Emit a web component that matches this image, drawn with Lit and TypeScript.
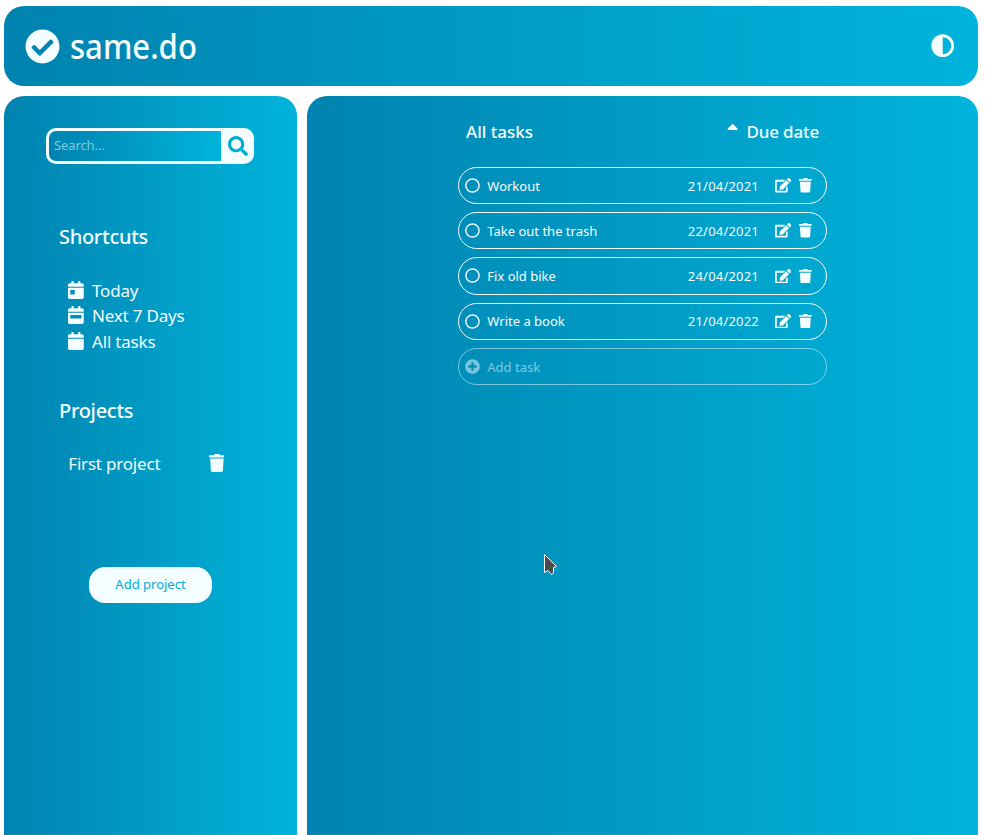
import { LitElement, html, css, svg } from "lit";
import { customElement, property } from "lit/decorators.js";

const CAL_TOP =
  "M400 64h-48V16c0-8.800-7.200-16-16-16h-32c-8.800 0-16 7.200-16 16v48H160V16c0-8.800-7.200-16-16-16h-32c-8.800 0-16 7.200-16 16v48H48C21.500 64 0 85.500 0 112v48h448v-48c0-26.500-21.500-48-48-48z";
const CAL_BODY = "M0 464c0 26.500 21.500 48 48 48h352c26.500 0 48-21.500 48-48V192H0v272z";

const ICONS: Record<string, [number, string]> = {
  check: [512, "M504 256c0 136.967-111.033 248-248 248S8 392.967 8 256 119.033 8 256 8s248 111.033 248 248zM227.314 387.314l184-184c6.248-6.248 6.248-16.379 0-22.627l-22.627-22.627c-6.248-6.249-16.379-6.249-22.628 0L216 308.118l-70.059-70.059c-6.248-6.248-16.379-6.248-22.628 0l-22.627 22.627c-6.248 6.248-6.248 16.379 0 22.627l104 104c6.249 6.249 16.379 6.249 22.628.001z"],
  adjust: [512, "M8 256c0 136.966 111.033 248 248 248s248-111.034 248-248S392.966 8 256 8 8 119.033 8 256zm248 184V72c101.705 0 184 82.311 184 184 0 101.705-82.311 184-184 184z"],
  search: [512, "M505 442.7L405.3 343c-4.5-4.5-10.600-7-17-7H372c27.600-35.300 44-79.700 44-128C416 93.100 322.900 0 208 0S0 93.100 0 208s93.100 208 208 208c48.300 0 92.700-16.400 128-44v16.300c0 6.400 2.500 12.500 7 17l99.700 99.700c9.400 9.400 24.600 9.400 33.900 0l28.300-28.300c9.400-9.400 9.400-24.600.1-34zM208 336c-70.700 0-128-57.200-128-128 0-70.700 57.200-128 128-128 70.700 0 128 57.200 128 128 0 70.700-57.200 128-128 128z"],
  day: [448, CAL_BODY + "M64 272c0-8.800 7.200-16 16-16h96c8.800 0 16 7.200 16 16v96c0 8.800-7.200 16-16 16H80c-8.800 0-16-7.200-16-16v-96z" + CAL_TOP],
  week: [448, CAL_BODY + "M64 272c0-8.800 7.200-16 16-16h288c8.800 0 16 7.200 16 16v64c0 8.800-7.200 16-16 16H80c-8.800 0-16-7.200-16-16v-64z" + CAL_TOP],
  calendar: [448, CAL_BODY + CAL_TOP],
  trash: [448, "M432 32H312l-9.400-18.700A24 24 0 0 0 281.100 0H166.800a23.720 23.720 0 0 0-21.400 13.300L136 32H16A16 16 0 0 0 0 48v32a16 16 0 0 0 16 16h416a16 16 0 0 0 16-16V48a16 16 0 0 0-16-16zM53.200 467a48 48 0 0 0 47.900 45h245.800a48 48 0 0 0 47.900-45L416 128H32z"],
  circle: [512, "M256 8C119 8 8 119 8 256s111 248 248 248 248-111 248-248S393 8 256 8zm0 448c-110.500 0-200-89.500-200-200S145.500 56 256 56s200 89.500 200 200-89.500 200-200 200z"],
  plus: [512, "M256 8C119 8 8 119 8 256s111 248 248 248 248-111 248-248S393 8 256 8zm144 276c0 6.600-5.400 12-12 12h-92v92c0 6.600-5.400 12-12 12h-56c-6.600 0-12-5.400-12-12v-92h-92c-6.600 0-12-5.400-12-12v-56c0-6.600 5.400-12 12-12h92v-92c0-6.600 5.400-12 12-12h56c6.600 0 12 5.400 12 12v92h92c6.600 0 12 5.400 12 12v56z"],
  edit: [576, "M402.600 83.200l90.200 90.200c3.800 3.800 3.800 10 0 13.800L274.400 405.600l-92.800 10.300c-12.400 1.400-22.900-9.100-21.500-21.500l10.300-92.800L388.800 83.200c3.800-3.800 10-3.800 13.800 0zm162-22.900l-48.800-48.800c-15.200-15.200-39.900-15.200-55.200 0l-35.400 35.400c-3.800 3.800-3.800 10 0 13.800l90.200 90.200c3.800 3.800 10 3.800 13.800 0l35.400-35.400c15.200-15.300 15.200-40 0-55.200zM384 346.200V448H64V128h229.800c3.200 0 6.200-1.300 8.500-3.500l40-40c7.600-7.600 2.200-20.500-8.500-20.500H48C21.500 64 0 85.500 0 112v352c0 26.500 21.500 48 48 48h352c26.500 0 48-21.500 48-48V306.200c0-10.700-12.900-16-20.500-8.500l-40 40c-2.200 2.300-3.500 5.300-3.500 8.500z"],
  up: [320, "M279 224H41c-21.400 0-32.100-25.900-17-41L143 64c9.400-9.400 24.600-9.400 33.900 0l119 119c15.200 15.100 4.500 41-16.900 41z"],
};

@customElement("app-icon")
export class AppIcon extends LitElement {
  @property() name = "check";
  static styles = css`
    :host { display: block; height: 1em; flex: none; }
    svg { display: block; height: 1em; fill: currentColor; }
  `;
  render() {
    const [w, d] = ICONS[this.name];
    return html`<svg viewBox="0 0 ${w} 512">${svg`<path fill-rule="evenodd" d=${d}></path>`}</svg>`;
  }
}

@customElement("app-root")
export class AppRoot extends LitElement {
  static styles = css`
    :host {
      --light: #f4fdff;
      --accent: #00acd4;
      --fade: linear-gradient(to right, #0083b0, #00b4db);
      display: flex;
      flex-direction: column;
      gap: 10px;
      box-sizing: border-box;
      height: 835px;
      padding: 6px 7px 0 4px;
      overflow: hidden;
      background: #fff;
      color: var(--light);
      font-family: "Noto Sans", sans-serif;
      position: relative;
    }
    * { box-sizing: border-box; }
    h1, h2, h3 { margin: 0; font-weight: 500; white-space: nowrap; }
    header {
      flex: none;
      height: 80px;
      border-radius: 20px;
      background: var(--fade);
      display: flex;
      align-items: center;
      justify-content: space-between;
      padding: 0 23.500px 0 20.500px;
    }
    .brand { display: flex; align-items: center; gap: 10px; }
    .brand app-icon { font-size: 35px; }
    h1 {
      font-size: 35px;
      line-height: 46px;
      transform: scaleX(0.888);
      transform-origin: left;
    }
    .theme { font-size: 23.500px; margin-top: -1.500px; }
    .body { flex: 1; display: flex; gap: 10px; min-height: 0; }
    aside {
      width: 293px;
      flex: none;
      border-radius: 20px 20px 0 0;
      background: var(--fade);
      padding: 32px 42px 0;
    }
    .search {
      display: flex;
      width: 208px;
      height: 36px;
      padding: 3px 0 3px 3px;
      border-radius: 10px;
      background: var(--light);
    }
    .field {
      width: 172px;
      border-radius: 7px 0 0 7px;
      background: var(--fade);
      color: #7fc9e0;
      font-size: 13px;
      line-height: 29px;
      padding-left: 5px;
      letter-spacing: -0.100px;
    }
    .go { flex: 1; display: grid; place-items: center; color: var(--accent); font-size: 20px; }
    h2 { font-size: 20px; line-height: 28px; padding-left: 13px; letter-spacing: -0.300px; }
    .shortcuts { margin-top: 59px; }
    .links { margin: 26.600px 0 0 22.300px; font-size: 17px; letter-spacing: -0.200px; }
    .link { display: flex; align-items: center; gap: 8px; height: 25.500px; }
    .link app-icon, .project app-icon { font-size: 18px; }
    .link app-icon { margin-top: -1px; }
    .projects { margin-top: 42.900px; }
    .project {
      display: flex;
      align-items: center;
      justify-content: space-between;
      width: 156px;
      height: 26px;
      margin: 26px 0 0 22.300px;
      font-size: 17px;
      letter-spacing: -0.200px;
    }
    .project app-icon { margin-top: -1px; }
    .add {
      width: 123px;
      height: 36px;
      margin: 90px 0 0 43px;
      border-radius: 16px;
      background: var(--light);
      color: var(--accent);
      font-size: 13px;
      line-height: 35px;
      text-align: center;
    }
    main {
      flex: 1;
      border-radius: 20px 20px 0 0;
      background: var(--fade);
      padding: 23px 151px 0;
    }
    .head { display: flex; justify-content: space-between; padding: 0 8px; height: 26px; }
    h3 { font-size: 17px; line-height: 26px; }
    .due h3 { letter-spacing: -0.150px; }
    .due { display: flex; gap: 8px; }
    .due app-icon { font-size: 18px; margin-top: 3px; }
    .list { display: flex; flex-direction: column; gap: 8px; margin-top: 21.900px; }
    .task {
      display: flex;
      align-items: center;
      height: 37.250px;
      padding: 0 14.500px 0 6px;
      border: 1px solid var(--light);
      border-radius: 20px;
      font-size: 13px;
    }
    .task app-icon { font-size: 15px; margin-top: -0.500px; }
    .name { flex: 1; padding-left: 7.300px; }
    .date { letter-spacing: 0.200px; }
    .task .edit { margin: -0.500px 7.500px 0 16px; font-size: 14.500px; }
    .task .trash { font-size: 14.500px; }
    .new { opacity: 0.5; }
    .pointer { position: absolute; left: 543px; top: 553px; width: 15px; height: 24px; }
  `;

  private links = [
    ["day", "Today"],
    ["week", "Next 7 Days"],
    ["calendar", "All tasks"],
  ];
  private tasks = [
    ["Workout", "21/04/2021"],
    ["Take out the trash", "22/04/2021"],
    ["Fix old bike", "24/04/2021"],
    ["Write a book", "21/04/2022"],
  ];

  render() {
    return html`
      <header>
        <div class="brand"><app-icon name="check"></app-icon><h1>same.do</h1></div>
        <app-icon class="theme" name="adjust"></app-icon>
      </header>
      <div class="body">
        <aside>
          <div class="search">
            <div class="field">Search...</div>
            <div class="go"><app-icon name="search"></app-icon></div>
          </div>
          <h2 class="shortcuts">Shortcuts</h2>
          <div class="links">
            ${this.links.map(([icon, label]) => html`
              <div class="link"><app-icon name=${icon}></app-icon><span>${label}</span></div>`)}
          </div>
          <h2 class="projects">Projects</h2>
          <div class="project"><span>First project</span><app-icon name="trash"></app-icon></div>
          <div class="add">Add project</div>
        </aside>
        <main>
          <div class="head">
            <h3>All tasks</h3>
            <div class="due"><app-icon name="up"></app-icon><h3>Due date</h3></div>
          </div>
          <div class="list">
            ${this.tasks.map(([name, date]) => html`
              <div class="task">
                <app-icon name="circle"></app-icon>
                <span class="name">${name}</span>
                <span class="date">${date}</span>
                <app-icon class="edit" name="edit"></app-icon>
                <app-icon class="trash" name="trash"></app-icon>
              </div>`)}
            <div class="task new"><app-icon name="plus"></app-icon><span class="name">Add task</span></div>
          </div>
        </main>
      </div>
      <svg class="pointer" viewBox="0 0 15 24">
        <path d="M1.500 1.500V19.500L5 17.500L8.500 21.500L10.500 20V14.500L13.500 13.500Z" fill="#4a4a4a" stroke="#fff" stroke-width="1"></path>
      </svg>
    `;
  }
}
